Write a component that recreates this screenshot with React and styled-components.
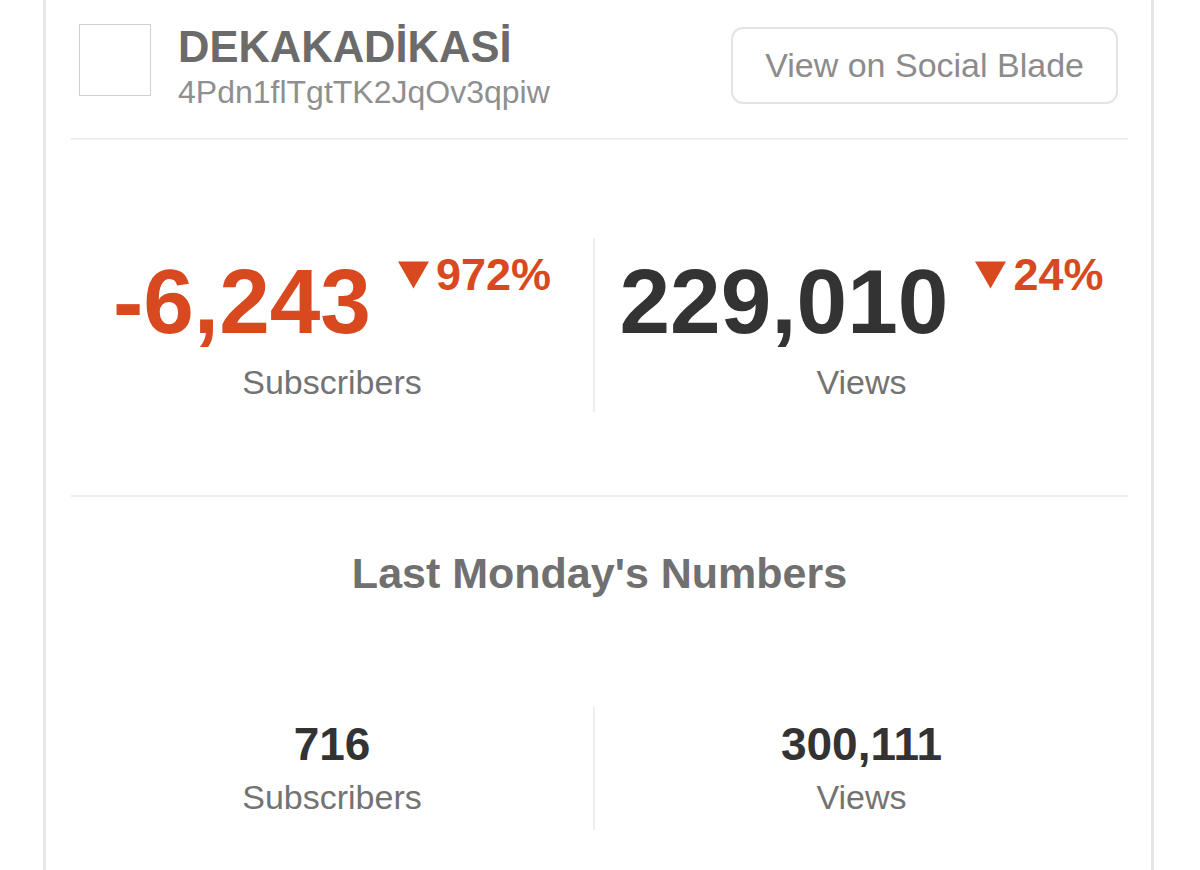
import styled, { createGlobalStyle } from "styled-components";

const GlobalStyle = createGlobalStyle`
    html, body {
        margin: 0;
        padding: 0;
        background: #fff;
    }

    body {
        font-family: "Liberation Sans", Arial, Helvetica, sans-serif;
    }
`;

const channel = {
    name: "DEKAKADİKASİ",
    id: "4Pdn1flTgtTK2JqOv3qpiw",
};

const current = [
    { value: "-6,243", label: "Subscribers", change: "972%", negative: true },
    { value: "229,010", label: "Views", change: "24%", negative: false },
];

const lastMonday = [
    { value: "716", label: "Subscribers" },
    { value: "300,111", label: "Views" },
];

export default function App() {
    return (
        <>
            <GlobalStyle />
            <Card>
                <Header>
                    <Avatar />
                    <ChannelInfo>
                        <ChannelName>{channel.name}</ChannelName>
                        <ChannelId>{channel.id}</ChannelId>
                    </ChannelInfo>
                    <BladeButton>View on Social Blade</BladeButton>
                </Header>

                <StatsRow>
                    {current.map(stat => (
                        <Stat key={stat.label}>
                            <ValueLine>
                                <BigValue $negative={stat.negative}>{stat.value}</BigValue>
                                <Change>
                                    <DownArrow />
                                    {stat.change}
                                </Change>
                            </ValueLine>
                            <Label>{stat.label}</Label>
                        </Stat>
                    ))}
                </StatsRow>

                <Section>
                    <SectionTitle>Last Monday's Numbers</SectionTitle>
                    <SmallStatsRow>
                        {lastMonday.map(stat => (
                            <SmallStat key={stat.label}>
                                <SmallValue>{stat.value}</SmallValue>
                                <Label>{stat.label}</Label>
                            </SmallStat>
                        ))}
                    </SmallStatsRow>
                </Section>
            </Card>
        </>
    );
}

function DownArrow() {
    return (
        <Arrow viewBox="0 0 32 28" aria-hidden="true">
            <polygon points="0,0 32,0 16,28" fill="currentColor" />
        </Arrow>
    );
}

const Card = styled.div`
    box-sizing: border-box;
    min-height: 870px;
    margin: 0 46px 0 43px;
    padding: 0 23px 0 25px;
    border-left: 3px solid #e6e6e6;
    border-right: 3px solid #e6e6e6;
`;

const Header = styled.div`
    display: flex;
    align-items: flex-start;
    padding: 23px 10px 28px 8px;
    border-bottom: 2px solid #eeeeee;
`;

const Avatar = styled.div`
    flex-shrink: 0;
    width: 70px;
    height: 70px;
    margin-top: 1px;
    border: 1px solid #cfcfcf;
`;

const ChannelInfo = styled.div`
    flex: 1;
    margin-left: 27px;
    display: flex;
    flex-direction: column;
    gap: 3px;
`;

const ChannelName = styled.div`
    font-size: 43.5px;
    line-height: 48px;
    font-weight: bold;
    color: #6b6b6b;
`;

const ChannelId = styled.div`
    font-size: 32px;
    line-height: 36px;
    color: #8f8f8f;
`;

const BladeButton = styled.button`
    margin-top: 4px;
    padding: 17px 32px;
    font-family: inherit;
    font-size: 34px;
    line-height: 39px;
    color: #8c8c8c;
    background: #fff;
    border: 2px solid #e4e4e4;
    border-radius: 12px;
    cursor: pointer;
`;

const StatsRow = styled.div`
    display: grid;
    grid-template-columns: 522px 1fr;
    padding: 98px 0 83px;
    border-bottom: 2px solid #eeeeee;
`;

const Stat = styled.div`
    display: flex;
    flex-direction: column;
    align-items: center;
    padding: 19px 0 10px;
    height: 174px;
    box-sizing: border-box;

    & + & {
        border-left: 2px solid #eeeeee;
    }
`;

const ValueLine = styled.div`
    display: flex;
    align-items: flex-start;
    gap: 27px;
`;

const BigValue = styled.div`
    font-size: 91px;
    line-height: 90px;
    font-weight: bold;
    color: ${props => (props.$negative ? "#d8491f" : "#333333")};
`;

const Change = styled.div`
    display: flex;
    align-items: center;
    gap: 7px;
    margin-top: -4px;
    font-size: 45px;
    line-height: 44px;
    font-weight: bold;
    color: #d8491f;
`;

const Arrow = styled.svg`
    width: 31px;
    height: 28px;
`;

const Label = styled.div`
    margin-top: 15px;
    font-size: 34px;
    line-height: 40px;
    color: #737373;
`;

const Section = styled.div`
    padding-top: 52px;
`;

const SectionTitle = styled.h2`
    margin: 0;
    text-align: center;
    font-size: 43px;
    line-height: 48px;
    font-weight: bold;
    color: #707070;
`;

const SmallStatsRow = styled.div`
    display: grid;
    grid-template-columns: 522px 1fr;
    margin-top: 110px;
`;

const SmallStat = styled.div`
    display: flex;
    flex-direction: column;
    align-items: center;
    height: 123px;
    padding-top: 12px;
    box-sizing: border-box;

    & + & {
        border-left: 2px solid #eeeeee;
    }

    ${Label} {
        margin-top: 8px;
    }
`;

const SmallValue = styled.div`
    font-size: 46px;
    line-height: 50px;
    font-weight: bold;
    color: #333333;
`;
